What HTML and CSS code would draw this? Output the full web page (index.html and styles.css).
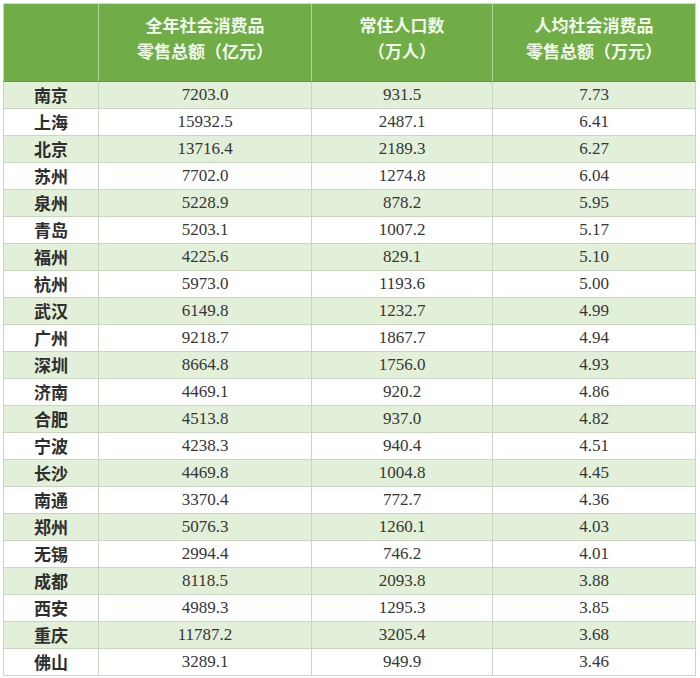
FILE: index.html
```html
<!DOCTYPE html>
<html lang="zh-CN">
<head>
<meta charset="utf-8">
<title>人均社会消费品零售总额</title>
<link rel="stylesheet" href="styles.css">
</head>
<body>
<table class="tbl">
  <colgroup>
    <col class="c1"><col class="c2"><col class="c3"><col class="c4">
  </colgroup>
  <thead>
    <tr>
      <th></th>
      <th>全年社会消费品<br>零售总额（亿元）</th>
      <th>常住人口数<br>（万人）</th>
      <th>人均社会消费品<br>零售总额（万元）</th>
    </tr>
  </thead>
  <tbody>
    <tr class="alt"><td class="city">南京</td><td>7203.0</td><td>931.5</td><td>7.73</td></tr>
    <tr><td class="city">上海</td><td>15932.5</td><td>2487.1</td><td>6.41</td></tr>
    <tr class="alt"><td class="city">北京</td><td>13716.4</td><td>2189.3</td><td>6.27</td></tr>
    <tr><td class="city">苏州</td><td>7702.0</td><td>1274.8</td><td>6.04</td></tr>
    <tr class="alt"><td class="city">泉州</td><td>5228.9</td><td>878.2</td><td>5.95</td></tr>
    <tr><td class="city">青岛</td><td>5203.1</td><td>1007.2</td><td>5.17</td></tr>
    <tr class="alt"><td class="city">福州</td><td>4225.6</td><td>829.1</td><td>5.10</td></tr>
    <tr><td class="city">杭州</td><td>5973.0</td><td>1193.6</td><td>5.00</td></tr>
    <tr class="alt"><td class="city">武汉</td><td>6149.8</td><td>1232.7</td><td>4.99</td></tr>
    <tr><td class="city">广州</td><td>9218.7</td><td>1867.7</td><td>4.94</td></tr>
    <tr class="alt"><td class="city">深圳</td><td>8664.8</td><td>1756.0</td><td>4.93</td></tr>
    <tr><td class="city">济南</td><td>4469.1</td><td>920.2</td><td>4.86</td></tr>
    <tr class="alt"><td class="city">合肥</td><td>4513.8</td><td>937.0</td><td>4.82</td></tr>
    <tr><td class="city">宁波</td><td>4238.3</td><td>940.4</td><td>4.51</td></tr>
    <tr class="alt"><td class="city">长沙</td><td>4469.8</td><td>1004.8</td><td>4.45</td></tr>
    <tr><td class="city">南通</td><td>3370.4</td><td>772.7</td><td>4.36</td></tr>
    <tr class="alt"><td class="city">郑州</td><td>5076.3</td><td>1260.1</td><td>4.03</td></tr>
    <tr><td class="city">无锡</td><td>2994.4</td><td>746.2</td><td>4.01</td></tr>
    <tr class="alt"><td class="city">成都</td><td>8118.5</td><td>2093.8</td><td>3.88</td></tr>
    <tr><td class="city">西安</td><td>4989.3</td><td>1295.3</td><td>3.85</td></tr>
    <tr class="alt"><td class="city">重庆</td><td>11787.2</td><td>3205.4</td><td>3.68</td></tr>
    <tr><td class="city">佛山</td><td>3289.1</td><td>949.9</td><td>3.46</td></tr>
  </tbody>
</table>
</body>
</html>
```
FILE: styles.css
```css
html, body {
  margin: 0;
  background: #ffffff;
}
body {
  padding: 3px 0 0 3px;
}
.tbl {
  border-collapse: collapse;
  table-layout: fixed;
  width: 692px;
  font-family: "Liberation Serif", "Noto Sans CJK SC", serif;
  color: #363636;
}
.c1 { width: 95px; }
.c2 { width: 213px; }
.c3 { width: 181px; }
.c4 { width: 203px; }

.tbl th {
  background: #70ad47;
  color: #f1f8ec;
  font-family: "Noto Sans CJK SC", sans-serif;
  font-weight: 700;
  font-size: 17px;
  line-height: 26px;
  height: 78px;
  padding: 0 0 10px 0;
  box-sizing: border-box;
  border-top: 1px solid #d6d6d6;
  border-left: 1px solid #b4d89c;
  border-right: 1px solid #b4d89c;
  border-bottom: 1px solid #5f9c3a;
  text-align: center;
}
.tbl th:first-child { border-left-color: #d0d0d0; }
.tbl th:last-child { border-right-color: #d0d0d0; }

.tbl td {
  height: 26px;
  padding: 0;
  border: 1px solid #c9d6c1;
  text-align: center;
  font-size: 17px;
  line-height: 26px;
  background: #ffffff;
}
.tbl tr.alt td {
  background: #e2efd9;
}
.tbl td.city {
  font-family: "Noto Sans CJK SC", sans-serif;
  font-weight: 700;
  color: #2e2e2e;
}
```
